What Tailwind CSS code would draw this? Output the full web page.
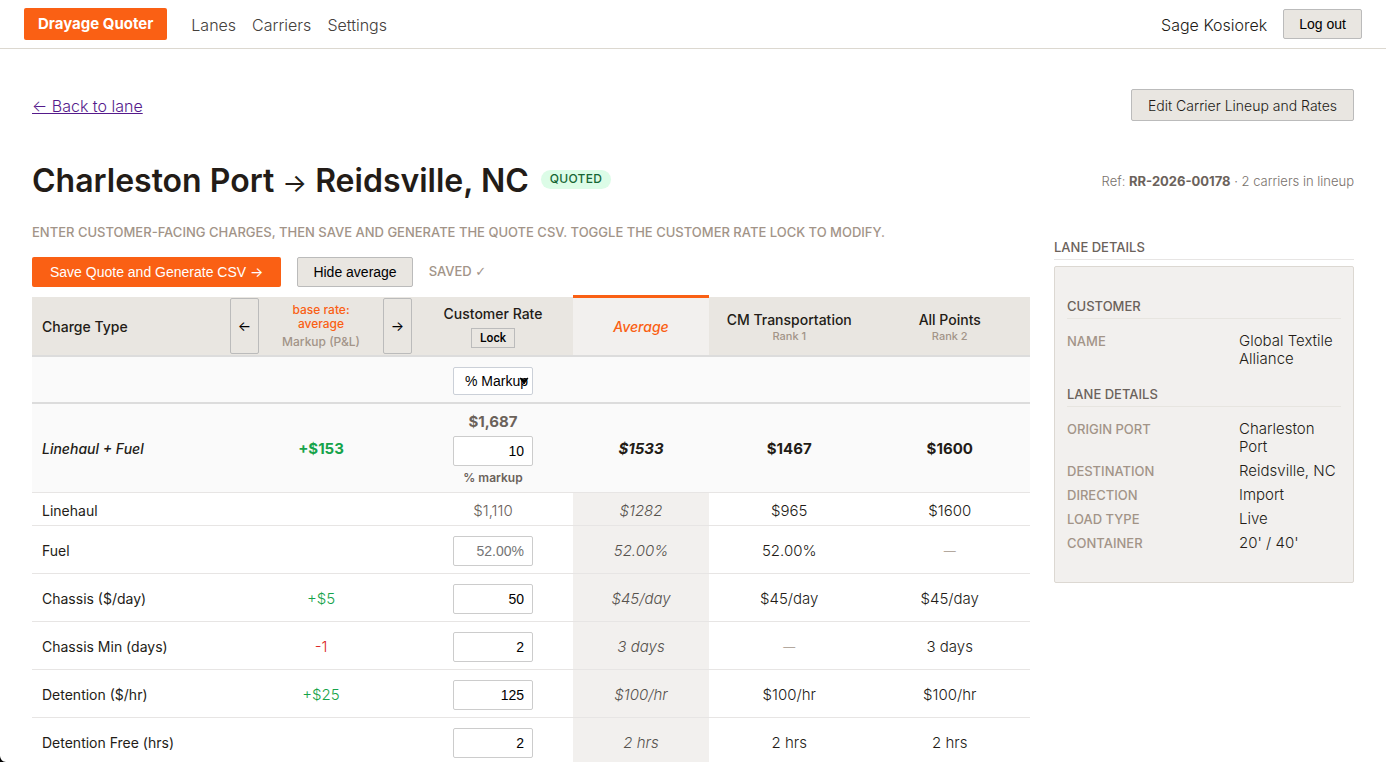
<!DOCTYPE html>
<html lang="en">

<head>
    <meta charset="UTF-8">
    <meta name="viewport" content="width=device-width, initial-scale=1.0">
    <title>Drayage Quoter</title>
    <script src="https://cdn.jsdelivr.net/npm/@tailwindcss/browser@4"></script>
</head>

<body class="bg-white text-[#231c17] font-['Inter','Liberation_Sans',sans-serif] font-light">
    <!-- Navigation -->
    <header class="flex justify-between items-center h-[49px] px-6 border-b border-[#dcd8d0]">
        <nav class="flex items-center gap-4 text-[#44403c]">
            <a href="#" class="flex items-center h-8 px-3.5 pt-px mr-2 rounded-xs bg-[#fa6014] text-white text-[15px] font-bold">Drayage Quoter</a>
            <a href="#" class="pt-0.5">Lanes</a>
            <a href="#" class="pt-0.5">Carriers</a>
            <a href="#" class="pt-0.5">Settings</a>
        </nav>
        <div class="flex items-center gap-4">
            <span class="pt-0.5">Sage Kosiorek</span>
            <button type="button" class="h-[30px] px-[15px] rounded-xs border border-[#bbb] bg-[#e9e6e1] text-black text-[14px] font-['Liberation_Sans',sans-serif] font-normal">Log out</button>
        </div>
    </header>

    <main class="px-8 pt-10">
        <div class="flex justify-between items-center h-8">
            <a href="#" class="pt-0.5 text-[#551a8b] underline">← Back to lane</a>
            <a href="#" class="flex items-center h-8 px-4 rounded-xs border border-[#bbb] bg-[#e9e6e1] text-[14px]">Edit Carrier Lineup and Rates</a>
        </div>

        <!-- Title -->
        <div class="flex justify-between items-center h-10 mt-10">
            <div class="flex items-center gap-3">
                <h1 class="pt-0.5 text-[32px] leading-10 font-semibold">Charleston Port <span class="font-normal text-[26px]">→</span> Reidsville, NC</h1>
                <span class="flex items-center h-[19px] px-[9px] mb-1 rounded-full bg-[#dcfce7] text-[#166534] text-[12px] font-medium tracking-wide">QUOTED</span>
            </div>
            <p class="pt-0.5 text-[13px] text-[#78716c]">Ref: <strong class="font-bold text-[#6b625b]">RR-2026-00178</strong> · 2 carriers in lineup</p>
        </div>

        <div class="flex gap-6 mt-6">
            <section class="flex-1 min-w-0">
                <p class="text-[13px] leading-[14px] font-medium text-[#a29488]">ENTER CUSTOMER-FACING CHARGES, THEN SAVE AND GENERATE THE QUOTE CSV. TOGGLE THE CUSTOMER RATE LOCK TO MODIFY.</p>
                <div class="flex items-center gap-4 mt-[18px] mb-2 font-['Liberation_Sans',sans-serif] font-normal text-[14px]">
                    <button type="button" class="h-[30px] px-[18px] rounded-xs bg-[#fa6014] text-white">Save Quote and Generate CSV <span class="font-['Inter']">→</span></button>
                    <button type="button" class="h-[30px] px-[15px] rounded-xs border border-[#bbb] bg-[#e9e6e1] text-black">Hide average</button>
                    <span class="text-[13px] font-['Inter'] font-medium text-[#a29488]">SAVED <span class="font-['DejaVu_Sans']">✓</span></span>
                </div>

                <!-- Charges -->
                <table class="w-full table-fixed border-collapse text-[15px] leading-5 text-center">
                    <colgroup>
                        <col class="w-[197px]">
                        <col class="w-[184px]">
                        <col class="w-[160px]">
                        <col class="w-[136px]">
                        <col>
                        <col>
                    </colgroup>
                    <thead>
                        <tr class="h-[59px] bg-[#e9e6e1] border-b-2 border-[#dcdcdc] text-[14px]">
                            <th class="px-2.5 pt-0.5 text-left font-medium">Charge Type</th>
                            <th class="p-0 font-normal">
                                <div class="flex justify-between items-center px-px">
                                    <button type="button" aria-label="Previous base rate" class="w-[29px] h-14 rounded-xs border border-[#bbb] text-black text-[14px]">←</button>
                                    <div class="w-20 text-[12px] leading-[14px]">
                                        <div class="text-[#fa6014] font-medium">base rate: average</div>
                                        <div class="mt-1 text-[#a29488] font-medium">Markup (P&amp;L)</div>
                                    </div>
                                    <button type="button" aria-label="Next base rate" class="w-[29px] h-14 rounded-xs border border-[#bbb] text-black text-[14px]">→</button>
                                </div>
                            </th>
                            <th class="p-0 font-medium">
                                Customer Rate
                                <button type="button" class="block mx-auto mt-1 h-5 px-2 border border-[#bbb] text-black text-[12px] leading-4 font-['Roboto'] font-medium">Lock</button>
                            </th>
                            <th class="p-0 pt-0.5 border-t-3 border-t-[#fa6014] bg-[#f2f0ee] text-[#fa6014] font-medium italic">Average</th>
                            <th class="p-0 font-medium">CM Transportation<div class="text-[11px] leading-3 text-[#a29488]">Rank 1</div></th>
                            <th class="p-0 font-medium">All Points<div class="text-[11px] leading-3 text-[#a29488]">Rank 2</div></th>
                        </tr>
                    </thead>
                    <tbody class="[&_td]:pt-[3px] [&_td]:pb-0">
                        <tr class="h-[47px] bg-[#fafafa] border-b-2 border-[#dcdcdc]">
                            <td></td>
                            <td></td>
                            <td>
                                <div class="relative w-20 h-7 mx-auto">
                                    <select aria-label="Rate mode" class="block appearance-none w-20 h-7 pl-[11px] rounded-xs border border-[#cbd0d8] bg-white text-black text-[14px] font-['Liberation_Sans',sans-serif] font-normal">
                                        <option>% Markup</option>
                                        <option>$ Markup</option>
                                    </select>
                                    <svg class="absolute right-1 top-2.5 pointer-events-none" width="10" height="8" viewBox="0 0 10 8"><path d="M1 1 L5 3 L9 1 L5 7 Z" fill="#000" stroke="#000" /></svg>
                                </div>
                            </td>
                            <td></td>
                            <td></td>
                            <td></td>
                        </tr>
                        <tr class="h-[90px] bg-[#fafafa] border-b border-[#e7e5e4] font-bold">
                            <td class="px-2.5 text-left text-[14px] font-medium italic">Linehaul + Fuel</td>
                            <td class="text-[#16a34a]">+$153</td>
                            <td class="text-[#6b625b]">
                                <div class="leading-4">$1,687</div>
                                <input aria-label="Linehaul and fuel markup" value="10" class="block mx-auto my-1.5 w-20 h-[30px] px-2 rounded-xs border border-[#ccc] bg-white text-black text-right text-[14px] font-['Liberation_Sans',sans-serif] font-normal">
                                <div class="text-[12px] leading-3 font-semibold">% markup</div>
                            </td>
                            <td class="italic">$1533</td>
                            <td>$1467</td>
                            <td>$1600</td>
                        </tr>
                        <tr class="h-[33px] border-b border-[#e7e5e4]">
                            <td class="px-2.5 text-left text-[14px] font-normal">Linehaul</td>
                            <td></td>
                            <td class="text-[#6b625b]">$1,110</td>
                            <td class="bg-[#f2f0ee] text-[#57534e] italic">$1282</td>
                            <td>$965</td>
                            <td>$1600</td>
                        </tr>
                        <tr class="h-12 border-b border-[#e7e5e4]">
                            <td class="px-2.5 text-left text-[14px] font-normal">Fuel</td>
                            <td></td>
                            <td><input aria-label="Fuel" value="52.00%" readonly class="block mx-auto w-20 h-[30px] px-2 rounded-xs border border-[#ccc] text-[#757575] text-right text-[14px] font-['Liberation_Sans',sans-serif] font-normal"></td>
                            <td class="bg-[#f2f0ee] text-[#57534e] italic">52.00%</td>
                            <td>52.00%</td>
                            <td class="text-[12px] text-[#a29488]">—</td>
                        </tr>
                        <tr class="h-12 border-b border-[#e7e5e4]">
                            <td class="px-2.5 text-left text-[14px] font-normal">Chassis ($/day)</td>
                            <td class="text-[#16a34a]">+$5</td>
                            <td><input aria-label="Chassis per day" value="50" class="block mx-auto w-20 h-[30px] px-2 rounded-xs border border-[#ccc] text-black text-right text-[14px] font-['Liberation_Sans',sans-serif] font-normal"></td>
                            <td class="bg-[#f2f0ee] text-[#57534e] italic">$45/day</td>
                            <td>$45/day</td>
                            <td>$45/day</td>
                        </tr>
                        <tr class="h-12 border-b border-[#e7e5e4]">
                            <td class="px-2.5 text-left text-[14px] font-normal">Chassis Min (days)</td>
                            <td class="text-[#dc2626]">-1</td>
                            <td><input aria-label="Chassis minimum days" value="2" class="block mx-auto w-20 h-[30px] px-2 rounded-xs border border-[#ccc] text-black text-right text-[14px] font-['Liberation_Sans',sans-serif] font-normal"></td>
                            <td class="bg-[#f2f0ee] text-[#57534e] italic">3 days</td>
                            <td class="text-[12px] text-[#a29488]">—</td>
                            <td>3 days</td>
                        </tr>
                        <tr class="h-12 border-b border-[#e7e5e4]">
                            <td class="px-2.5 text-left text-[14px] font-normal">Detention ($/hr)</td>
                            <td class="text-[#16a34a]">+$25</td>
                            <td><input aria-label="Detention per hour" value="125" class="block mx-auto w-20 h-[30px] px-2 rounded-xs border border-[#ccc] text-black text-right text-[14px] font-['Liberation_Sans',sans-serif] font-normal"></td>
                            <td class="bg-[#f2f0ee] text-[#57534e] italic">$100/hr</td>
                            <td>$100/hr</td>
                            <td>$100/hr</td>
                        </tr>
                        <tr class="h-12 border-b border-[#e7e5e4]">
                            <td class="px-2.5 text-left text-[14px] font-normal">Detention Free (hrs)</td>
                            <td></td>
                            <td><input aria-label="Detention free hours" value="2" class="block mx-auto w-20 h-[30px] px-2 rounded-xs border border-[#ccc] text-black text-right text-[14px] font-['Liberation_Sans',sans-serif] font-normal"></td>
                            <td class="bg-[#f2f0ee] text-[#57534e] italic">2 hrs</td>
                            <td>2 hrs</td>
                            <td>2 hrs</td>
                        </tr>
                    </tbody>
                </table>
            </section>

            <!-- Lane details -->
            <aside class="w-[300px] shrink-0 mt-3.5 text-[15px] leading-[18px]">
                <h2 class="pb-1 mb-1.5 border-b border-[#e7e5e4] text-[13px] leading-4 font-medium text-[#6b625b]">LANE DETAILS</h2>
                <div class="px-3 pt-[31px] pb-[30px] rounded-xs border border-[#dcd8d2] bg-[#f2f0ee]">
                    <h3 class="pb-1 border-b border-[#e7e5e0] text-[13px] leading-4 font-medium text-[#6b625b]">CUSTOMER</h3>
                    <dl class="grid grid-cols-[148px_1fr] gap-x-6 gap-y-1.5 mt-[13px] mb-[18px]">
                        <dt class="text-[13px] font-medium text-[#a29488]">NAME</dt>
                        <dd>Global Textile Alliance</dd>
                    </dl>
                    <h3 class="pb-1 border-b border-[#e7e5e0] text-[13px] leading-4 font-medium text-[#6b625b]">LANE DETAILS</h3>
                    <dl class="grid grid-cols-[148px_1fr] gap-x-6 gap-y-1.5 mt-[13px]">
                        <dt class="text-[13px] font-medium text-[#a29488]">ORIGIN PORT</dt>
                        <dd>Charleston Port</dd>
                        <dt class="text-[13px] font-medium text-[#a29488]">DESTINATION</dt>
                        <dd>Reidsville, NC</dd>
                        <dt class="text-[13px] font-medium text-[#a29488]">DIRECTION</dt>
                        <dd>Import</dd>
                        <dt class="text-[13px] font-medium text-[#a29488]">LOAD TYPE</dt>
                        <dd>Live</dd>
                        <dt class="text-[13px] font-medium text-[#a29488]">CONTAINER</dt>
                        <dd>20' / 40'</dd>
                    </dl>
                </div>
            </aside>
        </div>
    </main>

    <!-- Rounded window corner -->
    <svg class="fixed left-0 bottom-0" width="6" height="6" viewBox="0 0 6 6" aria-hidden="true"><path d="M0 0 Q0.500 5.500 6 6 H0 Z" fill="#000" /></svg>
</body>

</html>
